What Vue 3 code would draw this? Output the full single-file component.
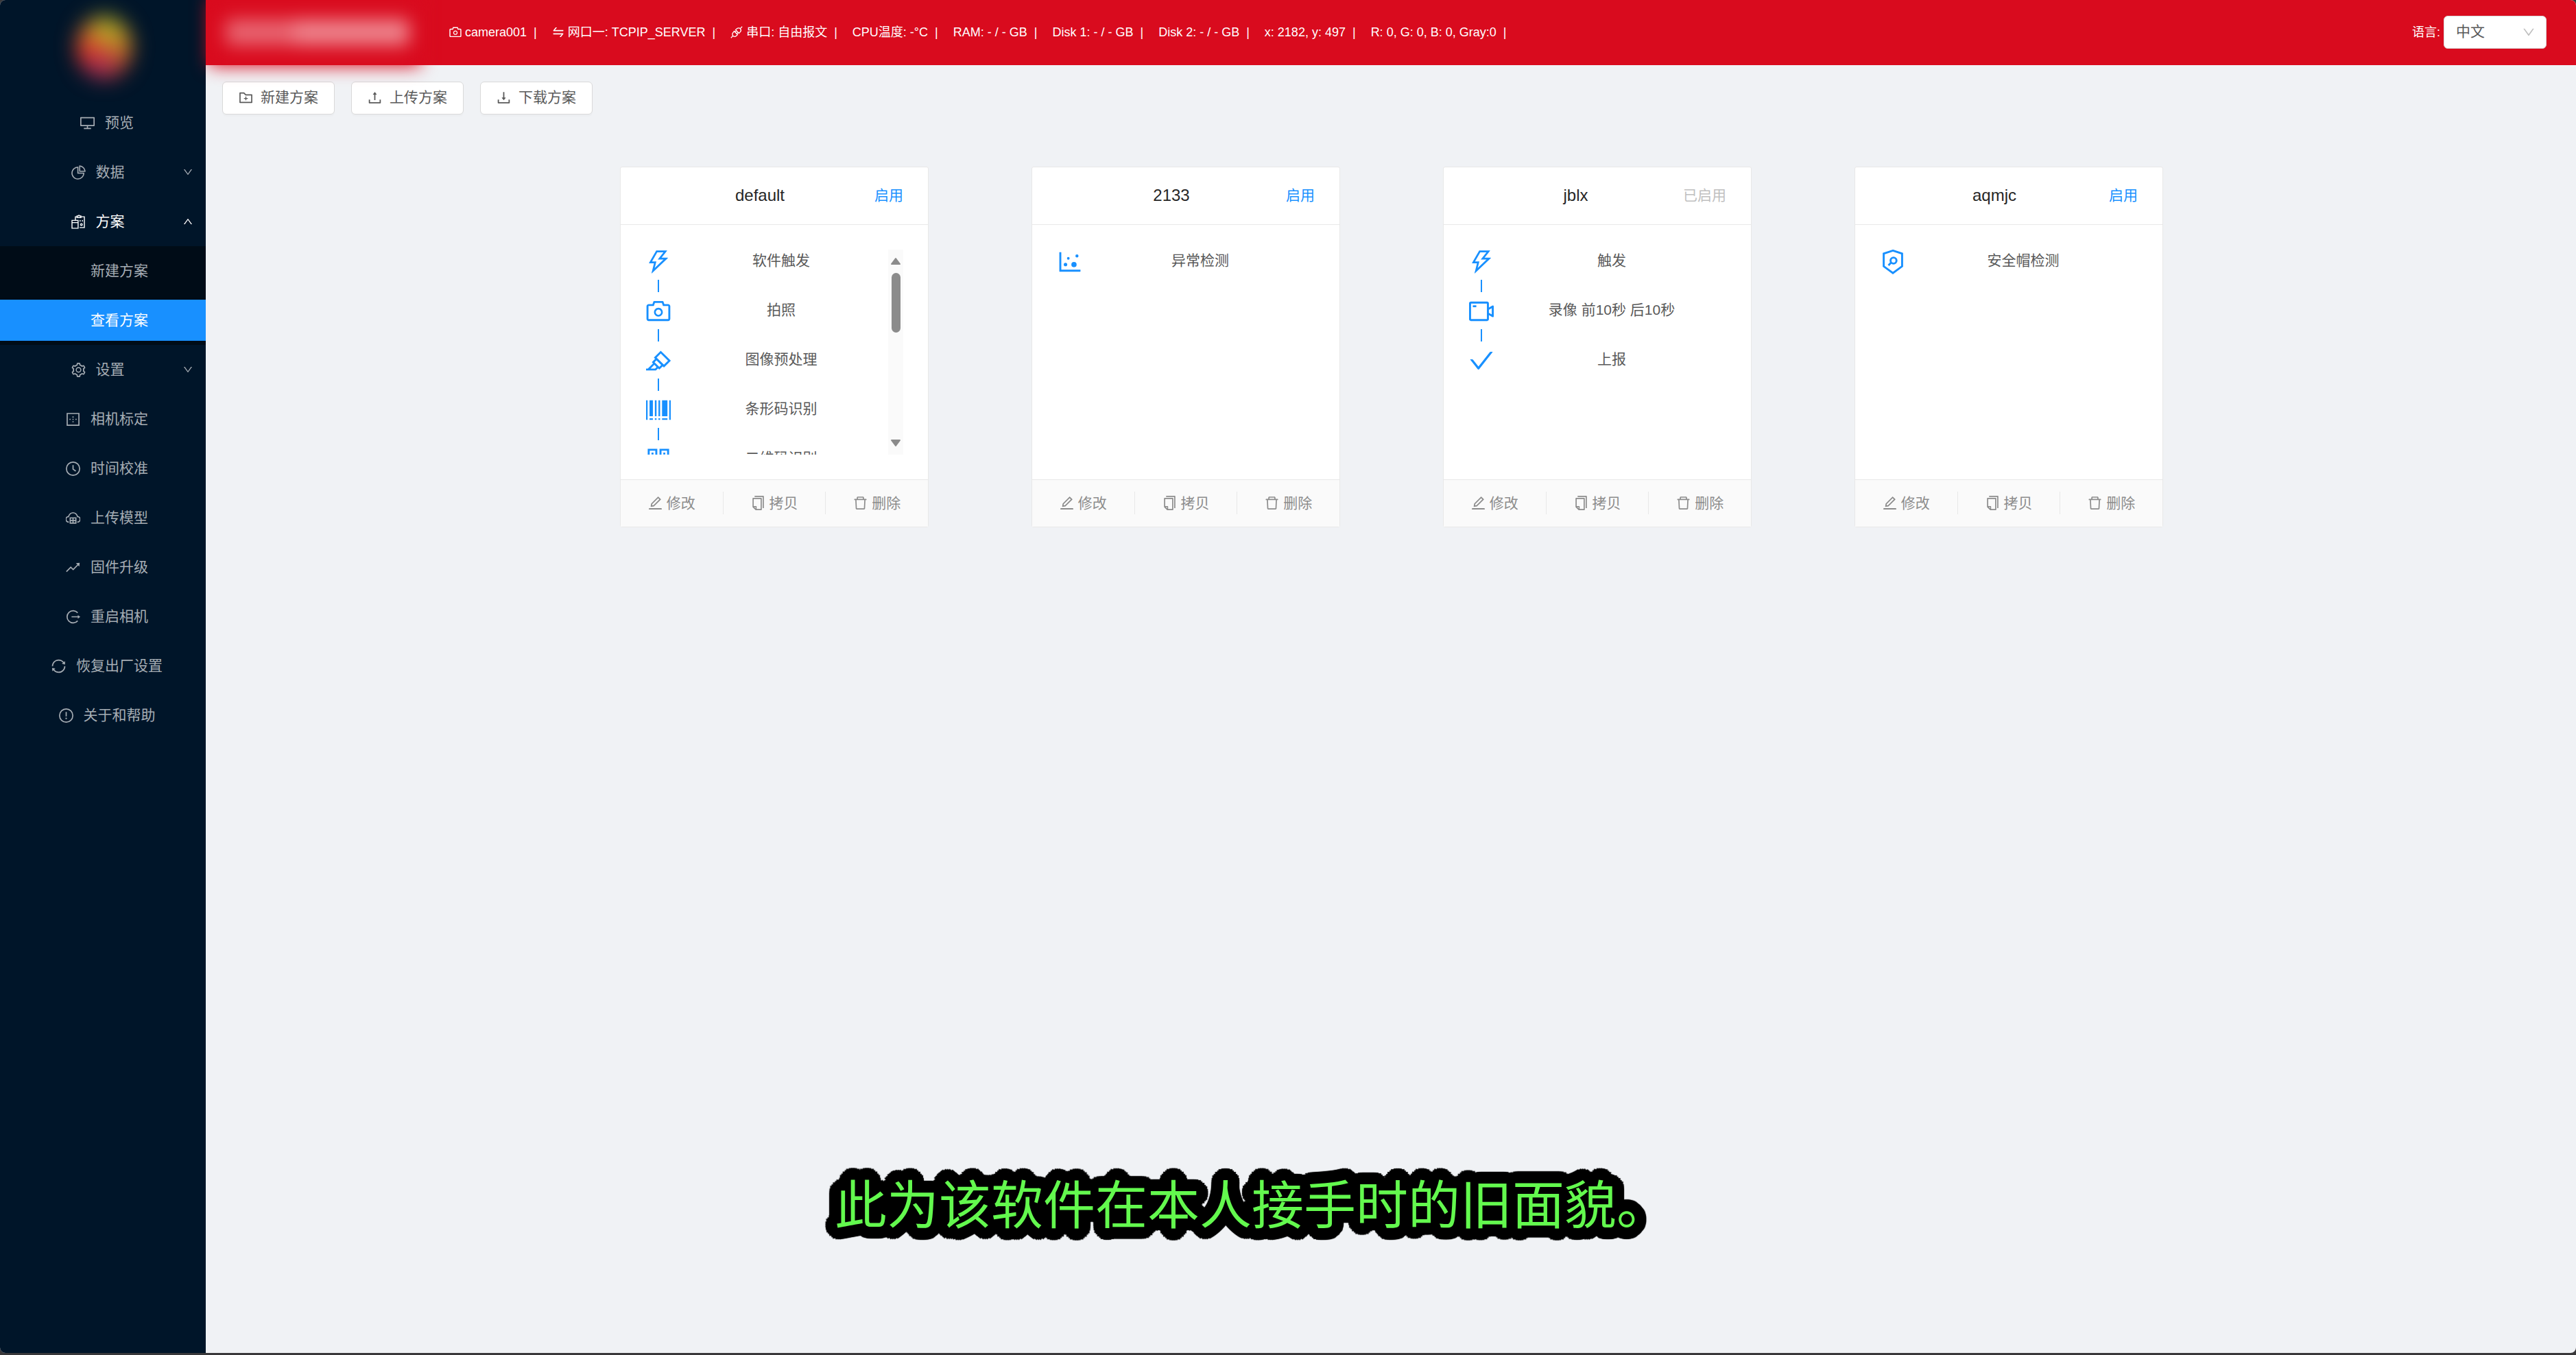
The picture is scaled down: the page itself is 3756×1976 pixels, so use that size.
<script setup>
import { h, ref } from 'vue'

const tray = 'M878 626h-60c-4.4 0-8 3.6-8 8v154H214V634c0-4.4-3.6-8-8-8h-60c-4.4 0-8 3.6-8 8v198c0 17.7 14.3 32 32 32h684c17.7 0 32-14.3 32-32V634c0-4.4-3.6-8-8-8z'

// fill: solid outlines, line: stroked centre lines, width: stroke width of the lines
const icons = {
  desktop: { fill: 'M928 140H96c-17.7 0-32 14.3-32 32v496c0 17.7 14.3 32 32 32h380v112H304c-8.8 0-16 7.2-16 16v48c0 4.4 3.6 8 8 8h432c4.4 0 8-3.6 8-8v-48c0-8.8-7.2-16-16-16H548V700h380c17.7 0 32-14.3 32-32V172c0-17.7-14.3-32-32-32zm-40 488H136V212h752v416z' },
  pie: { fill: 'M864 518H506V160c0-4.4-3.6-8-8-8h-26a398.46 398.46 0 00-282.8 117.1 398.19 398.19 0 00-85.7 127.1A397.61 397.61 0 0072 552a398.46 398.46 0 00117.1 282.8c36.7 36.7 79.5 65.6 127.1 85.7A397.61 397.61 0 00472 952a398.46 398.46 0 00282.8-117.1c36.7-36.7 65.6-79.5 85.7-127.1A397.61 397.61 0 00872 552v-26c0-4.4-3.6-8-8-8zM705.7 787.8A331.59 331.59 0 01470.4 884c-88.1-.4-170.9-34.9-233.2-97.2C174.5 724.1 140 640.7 140 552c0-88.7 34.5-172.1 97.2-234.8 54.6-54.6 124.9-87.9 200.8-95.5V586h364.3c-7.7 76.3-41.3 147-96.6 201.8zM952 462.4l-2.6-28.2c-8.5-92.1-49.4-179-115.2-244.6A399.4 399.4 0 00589 74.6L560.7 72c-4.7-.4-8.7 3.2-8.7 7.9V464c0 4.4 3.6 8 8 8l384-1c4.7 0 8.4-4 8-8.6zm-332.2-58.2V147.6a332.24 332.24 0 01166.4 89.8c45.7 45.6 77 103.6 90 166.1l-256.4.7z' },
  plan: { width: 60, line: 'M316 390V196h100M660 196h216v674H580M416 150h66a58 58 0 01112 0h66v96H416zM106 420h380v490H106zM106 560h380M636 680a56 56 0 10112 0 56 56 0 10-112 0M610 400v90M756 400v90' },
  setting: { fill: 'M924.8 625.7l-65.5-56c3.1-19 4.7-38.4 4.7-57.8s-1.6-38.8-4.7-57.8l65.5-56a32.03 32.03 0 009.3-35.2l-.9-2.6a443.74 443.74 0 00-79.7-137.9l-1.8-2.1a32.12 32.12 0 00-35.1-9.5l-81.3 28.9c-30-24.6-63.5-44-99.7-57.6l-15.7-85a32.05 32.05 0 00-25.8-25.7l-2.7-.5c-52.1-9.4-106.9-9.4-159 0l-2.7.5a32.05 32.05 0 00-25.8 25.7l-15.8 85.4a351.86 351.86 0 00-99 57.4l-81.9-29.1a32 32 0 00-35.1 9.5l-1.8 2.1a446.02 446.02 0 00-79.7 137.9l-.9 2.6c-4.5 12.5-.8 26.5 9.3 35.2l66.3 56.6c-3.1 18.8-4.6 38-4.6 57.1 0 19.2 1.5 38.4 4.6 57.1L99 625.5a32.03 32.03 0 00-9.3 35.2l.9 2.6c18.1 50.4 44.9 96.9 79.7 137.9l1.8 2.1a32.12 32.12 0 0035.1 9.5l81.9-29.1c29.8 24.5 63.1 43.9 99 57.4l15.8 85.4a32.05 32.05 0 0025.8 25.7l2.7.5a449.4 449.4 0 00159 0l2.7-.5a32.05 32.05 0 0025.8-25.7l15.7-85a350 350 0 0099.7-57.6l81.3 28.9a32 32 0 0035.1-9.5l1.8-2.1c34.8-41.1 61.6-87.5 79.7-137.9l.9-2.6c4.5-12.3.8-26.3-9.3-35zM788.3 465.9c2.5 15.1 3.8 30.6 3.8 46.1s-1.3 31-3.8 46.1l-6.6 40.1 74.7 63.9a370.03 370.03 0 01-42.6 73.6L721 702.8l-31.4 25.8c-23.9 19.6-50.5 35-79.3 45.8l-38.1 14.3-17.9 97a377.5 377.5 0 01-85 0l-17.9-97.2-37.8-14.5c-28.5-10.8-55-26.2-78.7-45.7l-31.4-25.9-93.4 33.2c-17-22.9-31.2-47.6-42.6-73.6l75.5-64.5-6.5-40c-2.4-14.9-3.7-30.3-3.7-45.5 0-15.3 1.2-30.6 3.7-45.5l6.5-40-75.5-64.5c11.3-26.1 25.6-50.7 42.6-73.6l93.4 33.2 31.4-25.9c23.7-19.5 50.2-34.9 78.7-45.7l37.9-14.3 17.9-97.2c28.1-3.2 56.8-3.2 85 0l17.9 97 38.1 14.3c28.7 10.8 55.4 26.2 79.3 45.8l31.4 25.8 92.8-32.9c17 22.9 31.2 47.6 42.6 73.6L781.8 426l6.5 39.9zM512 326c-97.2 0-176 78.8-176 176s78.8 176 176 176 176-78.8 176-176-78.8-176-176-176zm0 288a112 112 0 110-224 112 112 0 010 224z' },
  calibrate: { line: 'M148 148h728v728H148z', fill: 'M476 476h72v72h-72zM476 328h72v72h-72zM476 624h72v72h-72zM290 476h72v72h-72zM662 476h72v72h-72z' },
  clock: { line: 'M100 512a412 412 0 10824 0 412 412 0 10-824 0M512 290v250l170 120' },
  cloud: { line: 'M250 760A170 170 0 01230 420C290 250 400 180 512 180s222 70 282 240a170 170 0 01-20 340M336 500h352v330H336zM336 665h352M512 500v330' },
  rise: { line: 'M100 770L370 500l150 140 330-330', fill: 'M925 222l-24 232-208-208z' },
  restart: { line: 'M800 260A378 378 0 10800 764M420 512h430', fill: 'M810 400l150 112-150 112z' },
  sync: { fill: 'M168 504.2c1-43.7 10-86.1 26.9-126 17.3-41 42.1-77.7 73.7-109.4S337 212.3 378 195c42.4-17.9 87.4-27 133.9-27s91.5 9.1 133.8 27A341.5 341.5 0 01755 268.8c9.9 9.9 19.2 20.4 27.8 31.4l-60.2 47a8 8 0 003 14.1l175.7 43c5 1.2 9.9-2.6 9.9-7.7l.8-180.9c0-6.7-7.7-10.5-12.9-6.3l-56.4 44.1C765.8 155.1 646.2 92 511.8 92 282.7 92 96.3 275.6 92 503.8a8 8 0 008 8.2h60c4.4 0 7.9-3.5 8-7.8zm756 7.8h-60c-4.4 0-7.9 3.5-8 7.8-1 43.7-10 86.1-26.9 126-17.3 41-42.1 77.8-73.7 109.4A342.45 342.45 0 01512.1 856a342.24 342.24 0 01-243.2-100.8c-9.9-9.9-19.2-20.4-27.8-31.4l60.2-47a8 8 0 00-3-14.1l-175.7-43c-5-1.2-9.9 2.6-9.9 7.7l-.7 181c0 6.7 7.7 10.5 12.9 6.3l56.4-44.1C258.2 868.9 377.8 932 512.2 932c229.2 0 415.5-183.7 419.8-411.8a8 8 0 00-8-8.2z' },
  info: { line: 'M100 512a412 412 0 10824 0 412 412 0 10-824 0M512 290v280', fill: 'M464 688a48 48 0 1096 0 48 48 0 10-96 0z' },
  down: { fill: 'M884 256h-75c-5.1 0-9.9 2.5-12.9 6.6L512 654.2 227.9 262.6c-3-4.1-7.8-6.6-12.9-6.6h-75c-6.5 0-10.3 7.4-6.5 12.7l352.6 486.1c12.8 17.6 39 17.6 51.7 0l352.6-486.1c3.9-5.3.1-12.7-6.4-12.7z' },
  camera: { fill: 'M864 248H728l-32.4-90.8a32.07 32.07 0 00-30.2-21.2H358.6c-13.5 0-25.6 8.5-30.1 21.2L296 248H160c-44.2 0-80 35.8-80 80v456c0 44.2 35.8 80 80 80h704c44.2 0 80-35.8 80-80V328c0-44.2-35.8-80-80-80zm8 536c0 4.4-3.6 8-8 8H160c-4.4 0-8-3.6-8-8V328c0-4.4 3.6-8 8-8h186.7l17.1-47.8 22.9-64.2h250.5l22.9 64.2 17.1 47.8H864c4.4 0 8 3.6 8 8v456zM512 384c-88.4 0-160 71.6-160 160s71.6 160 160 160 160-71.6 160-160-71.6-160-160-160zm0 256c-53 0-96-43-96-96s43-96 96-96 96 43 96 96-43 96-96 96z' },
  swap: { fill: 'M847.9 592H152c-4.4 0-8 3.6-8 8v60c0 4.4 3.6 8 8 8h605.2L612.9 851c-4.1 5.2-.4 13 6.3 13h72.5c4.9 0 9.5-2.2 12.6-6.1l168.8-214.1c16.5-21 1.6-51.8-25.2-51.8zM872 356H266.8l144.3-183c4.1-5.2.4-13-6.3-13h-72.5c-4.9 0-9.5 2.2-12.6 6.1L150.9 380.2c-16.5 21-1.6 51.8 25.1 51.8h696c4.4 0 8-3.6 8-8v-60c0-4.4-3.6-8-8-8z' },
  plug: { width: 66, line: 'M440 340L684 584l90-90c60-60 70-160 10-234s-184-60-244-10zM340 440L584 684l-90 90c-60 60-160 70-234 10s-60-184-10-244zM780 244L920 104M244 780L104 920M400 500l90-90M524 624l90-90' },
  folderAdd: { fill: 'M484 443.1V528h-84.5c-4.1 0-7.5 3.1-7.5 7v42c0 3.8 3.4 7 7.5 7H484v84.9c0 3.9 3.2 7.1 7 7.1h42c3.9 0 7-3.2 7-7.1V584h84.5c4.1 0 7.5-3.2 7.5-7v-42c0-3.9-3.4-7-7.5-7H540v-84.9c0-3.9-3.1-7.1-7-7.1h-42c-3.8 0-7 3.2-7 7.1zm396-144.7H521L403.7 186.2a8.15 8.15 0 00-5.5-2.2H144c-17.7 0-32 14.3-32 32v592c0 17.7 14.3 32 32 32h736c17.7 0 32-14.3 32-32V330.4c0-17.7-14.3-32-32-32zM840 768H184V256h188.5l119.6 114.4H840V768z' },
  upload: { fill: 'M400 317.7h73.9V656c0 4.4 3.6 8 8 8h60c4.4 0 8-3.6 8-8V317.7H624c6.7 0 10.4-7.7 6.3-12.9L518.3 163a8 8 0 00-12.6 0l-112 141.7c-4.1 5.3-.4 13 6.3 13z' + tray },
  download: { fill: 'M505.7 661a8 8 0 0012.6 0l112-141.7c4.1-5.2.4-12.9-6.3-12.9h-74.1V168c0-4.4-3.6-8-8-8h-60c-4.4 0-8 3.6-8 8v338.3H400c-6.7 0-10.4 7.7-6.3 12.9l112 141.8z' + tray },
  bolt: { fill: 'M848 359.3H627.7L825.8 109c4.1-5.3.4-13-6.3-13H436c-2.8 0-5.5 1.5-6.9 4L170 547.5c-3.1 5.3.7 12 6.9 12h174.4l-89.4 357.6c-1.9 7.8 7.5 13.3 13.3 7.7L853.5 373c5.2-4.9 1.7-13.7-5.5-13.7zM378.2 732.5l60.3-241H281.1l189.6-327.4h224.6L487 427.4h211L378.2 732.5z' },
  highlight: { fill: 'M957.6 507.4L603.2 158.2a7.9 7.9 0 00-11.2 0L353.3 393.4a8.03 8.03 0 00-.1 11.3l.1.1 40 39.4-117.2 115.3a8.03 8.03 0 00-.1 11.3l.1.1 39.5 38.9-189.1 187H72.1c-4.4 0-8.1 3.6-8.1 8V860c0 4.4 3.6 8 8 8h344.9c2.1 0 4.1-.8 5.6-2.3l76.1-75.6 40.4 39.8a7.9 7.9 0 0011.2 0l117.1-115.6 40.1 39.5a7.9 7.9 0 0011.2 0l238.7-235.2c3.4-3 3.4-8 .3-11.2zM389.8 796.2H229.6l134.4-133 80.1 78.9-54.3 54.1zm154.8-62.1L373.2 565.2l68.6-67.6 171.4 168.9-68.6 67.6zm168.5-76.4L450.1 398.5l147.5-145.4 262.9 259.2-147.4 145.4z' },
  barcode: { fill: 'M64 160h56v704H64zM904 160h56v704h-56zM190 160h122v576H190zM384 160h60v576h-60zM514 160h60v576h-60zM644 160h196v576H644zM190 808h122v56H190zM384 808h60v56h-60zM514 808h60v56h-60zM644 808h196v56H644z' },
  qrcode: { line: 'M160 160h276v276H160zM588 160h276v276H588zM160 588h276v276H160zM588 588h276v276H588z', fill: 'M262 262h72v72h-72zM690 262h72v72h-72zM262 690h72v72h-72zM690 690h72v72h-72z' },
  dots: { fill: 'M888 792H200V168c0-4.4-3.6-8-8-8h-56c-4.4 0-8 3.6-8 8v688c0 4.4 3.6 8 8 8h752c4.4 0 8-3.6 8-8v-56c0-4.4-3.6-8-8-8zM288 604a64 64 0 10128 0 64 64 0 10-128 0zm118-224a48 48 0 1096 0 48 48 0 10-96 0zm158 228a96 96 0 10192 0 96 96 0 10-192 0zm148-314a56 56 0 10112 0 56 56 0 10-112 0z' },
  video: { fill: 'M912 302.3L784 376V224c0-35.3-28.7-64-64-64H128c-35.3 0-64 28.7-64 64v576c0 35.3 28.7 64 64 64h592c35.3 0 64-28.7 64-64V648l128 73.7c21.3 12.3 48-3.1 48-27.6V330c0-24.6-26.7-40-48-27.7zM712 792H136V232h576v560zm176-167l-104-59.8V458.9L888 399v226zM208 360h112c4.4 0 8-3.6 8-8v-48c0-4.4-3.6-8-8-8H208c-4.4 0-8 3.6-8 8v48c0 4.4 3.6 8 8 8z' },
  check: { fill: 'M912 190h-69.9c-9.8 0-19.1 4.5-25.1 12.2L404.7 724.5 207 474a32 32 0 00-25.1-12.2H112c-6.7 0-10.4 7.7-6.3 12.9l273.9 347c12.8 16.2 37.4 16.2 50.3 0l488.4-618.9c4.1-5.1.4-12.8-6.3-12.8z' },
  shield: { line: 'M512 100L846 208V670L512 916 178 670V208zM426 462a108 108 0 10216 0 108 108 0 10-216 0M450 530L350 636' },
  edit: { fill: 'M257.7 752c2 0 4-.2 6-.5L431.9 722c2-.4 3.9-1.3 5.3-2.8l423.9-423.9a9.96 9.96 0 000-14.1L694.9 114.9c-1.9-1.9-4.4-2.9-7.1-2.9s-5.2 1-7.1 2.9L256.8 538.8c-1.5 1.5-2.4 3.3-2.8 5.3l-29.5 168.2a33.5 33.5 0 009.4 29.8c6.6 6.4 14.9 9.9 23.8 9.9zm67.4-174.4L687.8 215l73.3 73.3-362.7 362.6-88.9 15.7 15.6-89zM880 836H144c-17.7 0-32 14.3-32 32v36c0 4.4 3.6 8 8 8h784c4.4 0 8-3.6 8-8v-36c0-17.7-14.3-32-32-32z' },
  copy: { fill: 'M832 64H296c-4.4 0-8 3.6-8 8v56c0 4.4 3.6 8 8 8h496v688c0 4.4 3.6 8 8 8h56c4.4 0 8-3.6 8-8V96c0-17.7-14.3-32-32-32zM704 192H192c-17.7 0-32 14.3-32 32v530.7c0 8.5 3.4 16.6 9.4 22.6l173.3 173.3c2.2 2.2 4.7 4 7.4 5.5v1.9h4.2c3.5 1.3 7.2 2 11 2H704c17.7 0 32-14.3 32-32V224c0-17.7-14.3-32-32-32zM350 856.2L263.9 770H350v86.2zM664 888H414V746c0-22.1-17.9-40-40-40H232V264h432v624z' },
  trash: { fill: 'M360 184h-8c4.4 0 8-3.6 8-8v8h304v-8c0 4.4 3.6 8 8 8h-8v72h72v-80c0-35.3-28.7-64-64-64H352c-35.3 0-64 28.7-64 64v80h72v-72zm504 72H160c-17.7 0-32 14.3-32 32v32c0 4.4 3.6 8 8 8h60.4l24.7 523c1.6 34.1 29.8 61 63.9 61h454c34.2 0 62.3-26.8 63.9-61l24.7-523H888c4.4 0 8-3.6 8-8v-32c0-17.7-14.3-32-32-32zM731.3 840H292.7l-24.2-512h487l-24.2 512z' },
}

const Icon = ({ name }) => {
  const { fill, line, width = 72 } = icons[name]
  return h('svg', { class: 'icon', viewBox: '64 64 896 896', 'aria-hidden': 'true' }, [
    fill && h('path', { d: fill, fill: 'currentColor' }),
    line && h('path', { d: line, fill: 'none', stroke: 'currentColor', 'stroke-width': width }),
  ])
}
Icon.props = ['name']

const menu = [
  { icon: 'desktop', label: '预览' },
  { icon: 'pie', label: '数据', group: true },
  { icon: 'plan', label: '方案', group: true, open: true, children: ['新建方案', '查看方案'] },
  { icon: 'setting', label: '设置', group: true },
  { icon: 'calibrate', label: '相机标定' },
  { icon: 'clock', label: '时间校准' },
  { icon: 'cloud', label: '上传模型' },
  { icon: 'rise', label: '固件升级' },
  { icon: 'restart', label: '重启相机' },
  { icon: 'sync', label: '恢复出厂设置' },
  { icon: 'info', label: '关于和帮助' },
]
const current = ref('查看方案')

const status = [
  { icon: 'camera', text: 'camera001' },
  { icon: 'swap', text: '网口一: TCPIP_SERVER' },
  { icon: 'plug', text: '串口: 自由报文' },
  { text: 'CPU温度: -°C' },
  { text: 'RAM: - / - GB' },
  { text: 'Disk 1: - / - GB' },
  { text: 'Disk 2: - / - GB' },
  { text: 'x: 2182, y: 497' },
  { text: 'R: 0, G: 0, B: 0, Gray:0' },
]

const language = ref('zh')

const tools = [
  { icon: 'folderAdd', label: '新建方案' },
  { icon: 'upload', label: '上传方案' },
  { icon: 'download', label: '下载方案' },
]

const plans = [
  {
    name: 'default',
    scroll: true,
    steps: [
      { icon: 'bolt', label: '软件触发' },
      { icon: 'camera', label: '拍照' },
      { icon: 'highlight', label: '图像预处理' },
      { icon: 'barcode', label: '条形码识别' },
      { icon: 'qrcode', label: '二维码识别' },
    ],
  },
  { name: '2133', steps: [{ icon: 'dots', label: '异常检测' }] },
  {
    name: 'jblx',
    enabled: true,
    steps: [
      { icon: 'bolt', label: '触发' },
      { icon: 'video', label: '录像 前10秒 后10秒' },
      { icon: 'check', label: '上报' },
    ],
  },
  { name: 'aqmjc', steps: [{ icon: 'shield', label: '安全帽检测' }] },
]

const actions = [
  { icon: 'edit', label: '修改' },
  { icon: 'copy', label: '拷贝' },
  { icon: 'trash', label: '删除' },
]

// Rings of hard shadows build the thick round outline of the caption
const ring = (radius, count) =>
  Array.from({ length: count }, (_, i) => {
    const angle = (i / count) * 2 * Math.PI
    return `${Math.round(radius * Math.cos(angle))}px ${Math.round(radius * Math.sin(angle))}px 1px #000`
  })
const outline = [...ring(17, 32), ...ring(12, 20), ...ring(6, 12)].join(', ')
</script>

<template>
  <div class="app">
    <aside class="sider">
      <div class="logo"><span class="logo-mark"></span></div>
      <nav class="menu">
        <template v-for="item in menu" :key="item.label">
          <a href="#" class="item" :class="{ group: item.group, open: item.open }">
            <Icon :name="item.icon" />
            <span>{{ item.label }}</span>
            <Icon v-if="item.group" name="down" class="arrow" />
          </a>
          <div v-if="item.children" class="submenu">
            <a
              v-for="child in item.children"
              :key="child"
              href="#"
              class="item child"
              :class="{ selected: child === current }"
              @click.prevent="current = child"
            >{{ child }}</a>
          </div>
        </template>
      </nav>
    </aside>

    <div class="main">
      <header class="header">
        <div class="brand"><span class="brand-short"></span><span class="brand-long"></span></div>
        <ul class="status">
          <li v-for="s in status" :key="s.text">
            <Icon v-if="s.icon" :name="s.icon" />
            <span>{{ s.text }}</span>
            <span class="bar">|</span>
          </li>
        </ul>
        <label class="lang-label" for="language">语言:</label>
        <div class="select">
          <select id="language" v-model="language">
            <option value="zh">中文</option>
            <option value="en">English</option>
          </select>
          <Icon name="down" />
        </div>
      </header>

      <main class="content">
        <div class="toolbar">
          <button v-for="t in tools" :key="t.label" type="button" class="tool">
            <Icon :name="t.icon" />
            <span>{{ t.label }}</span>
          </button>
        </div>

        <div class="plans">
          <article v-for="plan in plans" :key="plan.name" class="card">
            <div class="card-head">
              <h2>{{ plan.name }}</h2>
              <button type="button" class="enable" :disabled="plan.enabled">{{ plan.enabled ? '已启用' : '启用' }}</button>
            </div>
            <div class="card-body">
              <ol class="steps">
                <li v-for="step in plan.steps" :key="step.label">
                  <span class="step-icon"><Icon :name="step.icon" /></span>
                  <span class="step-text">{{ step.label }}</span>
                </li>
              </ol>
              <div v-if="plan.scroll" class="scrollbar" aria-hidden="true">
                <svg viewBox="0 0 16 12"><path d="M8 2l6 8H2z" /></svg>
                <span class="thumb"></span>
                <svg viewBox="0 0 16 12"><path d="M8 10l6-8H2z" /></svg>
              </div>
            </div>
            <div class="card-actions">
              <button v-for="a in actions" :key="a.label" type="button">
                <Icon :name="a.icon" />
                <span>{{ a.label }}</span>
              </button>
            </div>
          </article>
        </div>
      </main>
    </div>

    <p class="caption">此为该软件在本人接手时的旧面貌。</p>
  </div>
</template>

<style>
html {
  background: #39383a;
}
body {
  margin: 0;
}
</style>

<style scoped>
* {
  box-sizing: border-box;
}
.app {
  position: relative;
  display: flex;
  height: calc(100vh - 3px);
  min-height: 1100px;
  border-radius: 8px;
  overflow: hidden;
  background: #f0f2f5;
  color: #595959;
  font: 21px/32px "Liberation Sans", "Noto Sans CJK SC", sans-serif;
}
button,
select {
  font: inherit;
  color: inherit;
}
.icon {
  display: block;
  flex: none;
  width: 21px;
  height: 21px;
}

.sider {
  flex: none;
  width: 300px;
  background: #001529;
}
.logo {
  display: flex;
  justify-content: center;
  align-items: center;
  height: 137px;
  padding-left: 4px;
}
.logo-mark {
  width: 80px;
  height: 92px;
  border-radius: 50%;
  background: conic-gradient(#a0a828, #c89824 60deg, #c86428 110deg, #b03048 170deg, #a03058 200deg, #e83028 250deg, #d87028 310deg, #a0a828);
  filter: blur(15px);
}
.menu {
  display: flex;
  flex-direction: column;
  gap: 12px;
  padding: 12px 0;
}
.item {
  position: relative;
  display: flex;
  align-items: center;
  justify-content: center;
  gap: 15px;
  height: 60px;
  padding: 0 24px 0 36px;
  color: #a6adb4;
  text-decoration: none;
}
.item.group {
  padding-right: 51px;
}
.item.open {
  color: #fff;
}
.arrow {
  position: absolute;
  right: 19px;
  width: 14px;
  height: 14px;
}
.open .arrow {
  transform: rotate(180deg);
}
.submenu {
  display: flex;
  flex-direction: column;
  gap: 12px;
  margin: -6px 0;
  padding: 6px 0;
  background: #000c17;
}
.item.child {
  padding-left: 72px;
}
.item.selected {
  background: #1890ff;
  color: #fff;
}

.main {
  flex: 1;
  min-width: 0;
}
.header {
  position: relative;
  display: flex;
  align-items: center;
  height: 95px;
  padding: 0 43px 2px 5px;
  background: #d90b1e;
  color: #fff;
  font-size: 18px;
  line-height: 28px;
}
.brand {
  display: flex;
  align-items: center;
  width: 308px;
  height: 98px;
  padding: 0 16px 0 24px;
  background: #d90b1e;
  filter: blur(13px);
}
.brand-short,
.brand-long {
  height: 38px;
  background: #ee838c;
}
.brand-short {
  width: 100px;
  border-radius: 8px 0 0 8px;
  background: #e86470;
}
.brand-long {
  flex: 1;
  border-radius: 0 8px 8px 0;
}
.status {
  display: flex;
  flex: 1;
  gap: 22px;
  margin: 0;
  padding: 0 0 0 42px;
  list-style: none;
  white-space: nowrap;
}
.status li {
  display: flex;
  align-items: center;
  gap: 5px;
}
.status .icon {
  width: 18px;
  height: 18px;
}
.bar {
  margin-left: 5px;
}
.lang-label {
  margin-right: 5px;
}
.select {
  position: relative;
  width: 150px;
}
.select select {
  display: block;
  width: 100%;
  height: 48px;
  padding: 0 17px 2px;
  border: 1px solid #d9d9d9;
  border-radius: 6px;
  background: #fff;
  color: #595959;
  font-size: 21px;
  appearance: none;
}
.select .icon {
  position: absolute;
  top: 15px;
  right: 17px;
  width: 18px;
  height: 18px;
  color: #bfbfbf;
  pointer-events: none;
}

.content {
  padding: 24px;
}
.toolbar {
  display: flex;
  gap: 24px;
}
.tool {
  display: flex;
  align-items: center;
  gap: 11px;
  height: 48px;
  padding: 0 23px 2px;
  border: 1px solid #d9d9d9;
  border-radius: 6px;
  background: #fff;
  box-shadow: 0 3px 0 rgba(0, 0, 0, 0.015);
}
.plans {
  display: grid;
  grid-template-columns: repeat(auto-fit, 450px);
  justify-content: center;
  gap: 72px 150px;
  padding: 76px 0 0 2px;
}
.card {
  border: 1px solid #e8e8e8;
  border-radius: 3px;
  background: #fff;
}
.card-head {
  display: flex;
  align-items: center;
  height: 84px;
  padding: 0 36px 2px;
  border-bottom: 1px solid #e8e8e8;
}
.card-head h2 {
  flex: 1;
  margin: 0;
  color: #262626;
  font-size: 24px;
  font-weight: 400;
  text-align: center;
}
.enable {
  padding: 0;
  border: 0;
  background: none;
  color: #1890ff;
}
.enable:disabled {
  color: #bfbfbf;
}
.card-body {
  display: flex;
  padding: 36px;
}
.steps {
  flex: 1;
  height: 299px;
  margin: 0;
  padding: 0;
  overflow: hidden;
  list-style: none;
}
.steps li {
  position: relative;
  display: flex;
  gap: 4px;
  height: 72px;
}
.steps li:not(:last-child)::before {
  content: "";
  position: absolute;
  top: 44px;
  left: 18px;
  width: 2px;
  height: 18px;
  background: #1890ff;
}
.step-icon {
  display: flex;
  justify-content: center;
  width: 38px;
  color: #1890ff;
}
.step-icon .icon {
  width: 36px;
  height: 36px;
}
.step-text {
  flex: 1;
  text-align: center;
}
.scrollbar {
  display: flex;
  flex-direction: column;
  align-items: center;
  width: 22px;
  padding: 11px 0;
  background: #fafafa;
}
.scrollbar svg {
  width: 16px;
  height: 12px;
  fill: #8b8b8b;
  stroke: #8b8b8b;
  stroke-width: 2;
  stroke-linejoin: round;
}
.thumb {
  width: 13px;
  height: 87px;
  margin: 11px 0 auto;
  border-radius: 7px;
  background: #8b8b8b;
}
.card-actions {
  display: flex;
  padding: 17px 0 18px;
  border-top: 1px solid #e8e8e8;
  background: #fafafa;
}
.card-actions button {
  display: flex;
  flex: 1;
  align-items: center;
  justify-content: center;
  gap: 6px;
  height: 33px;
  padding: 0;
  border: 0;
  background: none;
  color: #8c8c8c;
}
.card-actions button + button {
  border-left: 1px solid #e8e8e8;
}

.caption {
  position: absolute;
  right: 0;
  bottom: 165px;
  left: 0;
  margin: 0;
  padding-right: 106px;
  color: #63f94e;
  font: 76px/112px KaiTi, STKaiti, "Noto Sans CJK SC", sans-serif;
  text-align: center;
  text-shadow: v-bind(outline);
  pointer-events: none;
}
</style>
